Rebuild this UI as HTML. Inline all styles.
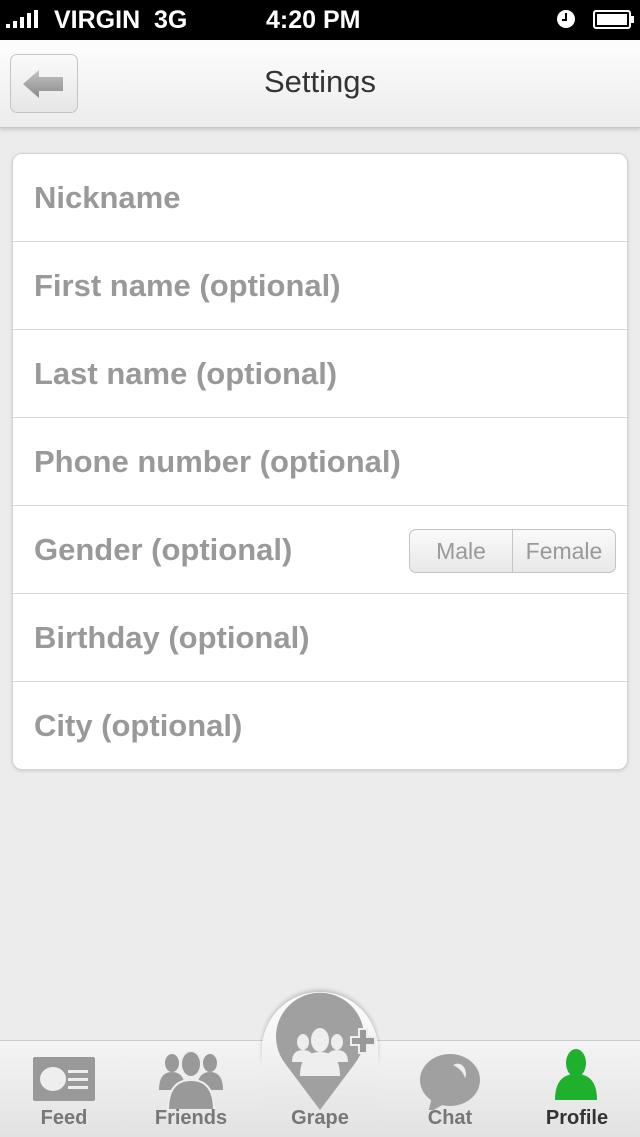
<!DOCTYPE html>
<html><head><meta charset="utf-8"><style>
body{margin:0;width:640px;height:1136px;position:relative;overflow:hidden;font-family:"Liberation Sans",sans-serif;background:#ececec;}
.sb{position:absolute;top:0;left:0;width:640px;height:40px;background:#000;color:#fff;font-weight:bold;font-size:25px;}
.nav{position:absolute;top:40px;left:0;width:640px;height:87px;background:linear-gradient(#fdfdfd,#ececec);border-bottom:1px solid #c8c8c8;box-shadow:0 2px 4px rgba(0,0,0,.15);}
.back{position:absolute;left:10px;top:14px;width:66px;height:57px;border:1px solid #c4c4c4;border-radius:7px;background:linear-gradient(#fafafa,#e6e6e6);}
.title{position:absolute;left:0;width:640px;top:24px;text-align:center;font-size:31px;color:#333;}
.card{position:absolute;left:12px;top:153px;width:614px;height:615px;background:#fff;border:1px solid #d4d4d4;border-radius:10px;box-shadow:0 1px 3px rgba(0,0,0,.15);}
.row{height:87px;border-bottom:1px solid #d8d8d8;font-size:31px;font-weight:bold;color:#999;line-height:87px;padding-left:21px;position:relative;}
.row:last-child{border-bottom:none}
.seg{position:absolute;right:11px;top:23px;height:42px;display:flex;border:1px solid #c4c4c4;border-radius:7px;overflow:hidden;font-weight:normal;font-size:23px;line-height:42px;color:#999;background:linear-gradient(#fafafa,#e8e8e8);}
.seg div{width:102px;text-align:center}
.seg div+div{border-left:1px solid #c4c4c4;}
.tab{position:absolute;top:1040px;left:0;width:640px;height:96px;background:linear-gradient(#f4f4f4,#e2e2e2);border-top:1px solid #ccc;}
.lbl{position:absolute;top:1107px;font-size:20px;font-weight:bold;color:#777;width:120px;text-align:center}
</style></head><body>
<div class="sb">
<svg style="position:absolute;left:6px;top:10px" width="42" height="18"><rect x="0" y="14" width="4" height="4" fill="#fff"/><rect x="7" y="11" width="4" height="7" fill="#fff"/><rect x="14" y="7" width="4" height="11" fill="#fff"/><rect x="21" y="3" width="4" height="15" fill="#fff"/><rect x="28" y="0" width="4" height="18" fill="#fff"/></svg>
<span style="position:absolute;left:54px;top:6px">VIRGIN&nbsp; 3G</span>
<span style="position:absolute;left:266px;top:6px">4:20 PM</span>
<svg style="position:absolute;left:556px;top:9px" width="80" height="22"><circle cx="10" cy="10" r="9" fill="#fff"/><path d="M10 4v7h-4" stroke="#000" stroke-width="2" fill="none"/><rect x="38" y="2" width="36" height="17" rx="2" fill="none" stroke="#fff" stroke-width="2"/><rect x="41" y="5" width="30" height="11" fill="#fff"/><rect x="75" y="7" width="3" height="7" fill="#fff"/></svg>
</div>
<div class="nav"><div class="back"><svg width="66" height="57"><defs><linearGradient id="ag" x1="0" y1="0" x2="0" y2="1"><stop offset="0" stop-color="#c4c4c4"/><stop offset="1" stop-color="#8a8a8a"/></linearGradient></defs><path d="M12 29 L28 15 V22 H52 V36 H28 V43 Z" fill="url(#ag)"/></svg></div><div class="title">Settings</div></div>
<div class="card">
<div class="row">Nickname</div>
<div class="row">First name (optional)</div>
<div class="row">Last name (optional)</div>
<div class="row">Phone number (optional)</div>
<div class="row">Gender (optional)<div class="seg"><div>Male</div><div>Female</div></div></div>
<div class="row">Birthday (optional)</div>
<div class="row">City (optional)</div>
</div>
<div class="tab"></div>
<div style="position:absolute;left:262px;top:992px;width:116px;height:116px;border-radius:50%;background:linear-gradient(#fbfbfb,#eee);box-shadow:0 -2px 4px rgba(0,0,0,.2)"></div>
<div style="position:absolute;left:262px;top:1041px;width:116px;height:70px;background:linear-gradient(#f4f4f4,#e6e6e6)"></div>
<svg style="position:absolute;left:0;top:980px" width="640" height="130" viewBox="0 -20 640 130">
<rect x="33" y="57" width="62" height="44" rx="2" fill="#999"/><ellipse cx="53" cy="79" rx="13" ry="12" fill="#eee"/><rect x="68" y="70" width="20" height="3" fill="#eee"/><rect x="68" y="78" width="20" height="3" fill="#eee"/><rect x="68" y="86" width="20" height="3" fill="#eee"/>
<g fill="#999"><ellipse cx="172" cy="63" rx="7" ry="9"/><ellipse cx="210" cy="63" rx="7" ry="9"/><path d="M159 90q0-18 13-18q13 0 13 18z"/><path d="M197 90q0-18 13-18q13 0 13 18z"/><ellipse cx="191" cy="64" rx="10" ry="13" stroke="#eee" stroke-width="2"/><path d="M168 110q0-30 23-30q23 0 23 30z" stroke="#eee" stroke-width="2"/></g>
<path d="M320 110 L284 62 A44 44 0 1 1 356 62 Z" fill="#a0a0a0"/>
<g fill="#eee"><ellipse cx="303" cy="42" rx="6" ry="8"/><ellipse cx="337" cy="42" rx="6" ry="8"/><ellipse cx="320" cy="40" rx="9" ry="12"/><path d="M300 76q0-24 20-24q20 0 20 24z"/><path d="M292 62q0-12 11-12q11 0 11 12z"/><path d="M326 62q0-12 11-12q11 0 11 12z"/></g>
<path d="M351 37h8v-8h8v8h8v8h-8v8h-8v-8h-8z" fill="#999" stroke="#eee" stroke-width="2"/>
<ellipse cx="450" cy="80" rx="30" ry="26" fill="#a0a0a0"/><path d="M432 97 L428 113 L446 103 Z" fill="#a0a0a0"/><path d="M453 65q8-4 12 4q2 6 0 9q-2-8-12-13z" fill="#eee"/>
<g fill="#1fb02e"><ellipse cx="576" cy="63" rx="10" ry="14"/><path d="M555 100q0-26 21-26q21 0 21 26z"/></g>
</svg>
<div class="lbl" style="left:4px">Feed</div>
<div class="lbl" style="left:131px">Friends</div>
<div class="lbl" style="left:260px">Grape</div>
<div class="lbl" style="left:390px">Chat</div>
<div class="lbl" style="left:517px;color:#333">Profile</div>
</body></html>
